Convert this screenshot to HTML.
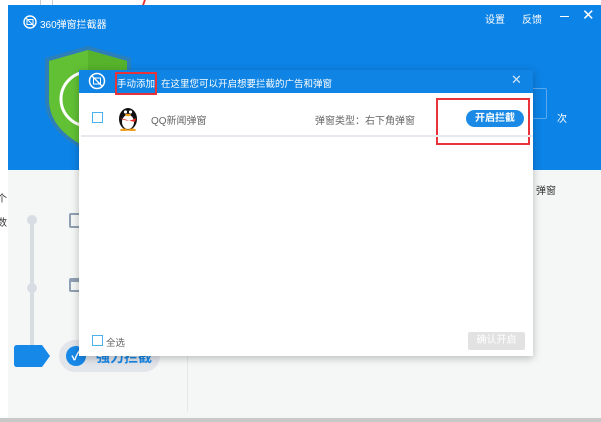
<!DOCTYPE html>
<html><head><meta charset="utf-8"><style>
*{margin:0;padding:0;box-sizing:border-box}
body{width:601px;height:422px;overflow:hidden;background:#fff;position:relative;font-family:"Liberation Sans","Noto Sans CJK SC",sans-serif;font-size:10px}
.a{position:absolute;white-space:nowrap}
</style></head><body>
<div class="a" style="left:40px;top:0;width:1px;height:5px;background:#ccc"></div>
<div class="a" style="left:52px;top:0;width:1px;height:5px;background:#ccc"></div>
<div class="a" style="left:143px;top:0;width:2px;height:5px;background:#e33;transform:skewX(-20deg)"></div>
<div class="a" style="left:0;top:418px;width:601px;height:4px;background:#c8c8c8"></div>
<!-- main window -->
<div class="a" style="left:8px;top:5px;width:600px;height:413px;background:#f5f7f7"></div>
<div class="a" style="left:8px;top:5px;width:600px;height:165px;background:#0c83e6"></div>
<svg class="a" style="left:23px;top:15px" width="14" height="14" viewBox="0 0 14 14"><circle cx="7" cy="7" r="6" fill="none" stroke="#fff" stroke-width="1.4"/><rect x="4" y="4.5" width="6" height="5" fill="none" stroke="#fff"/><line x1="3" y1="3" x2="11" y2="11" stroke="#fff"/></svg>
<div class="a" style="left:40px;top:16px;color:#fff;font-size:10px">360弹窗拦截器</div>
<div class="a" style="left:485px;top:11px;color:#fff;font-size:10px">设置</div>
<div class="a" style="left:522px;top:11px;color:#fff;font-size:10px">反馈</div>
<div class="a" style="left:560px;top:16px;width:9px;height:1px;background:#fff"></div>
<div class="a" style="left:582px;top:6px;color:#fff;font-size:15px">✕</div>
<svg class="a" style="left:43px;top:44px" width="90" height="110" viewBox="0 0 90 110"><path d="M45 2 L88 14 V55 C88 80 70 96 45 108 C20 96 2 80 2 55 V14 Z" fill="#2c7fb8"/><path d="M45 6 L84 17 V55 C84 78 68 93 45 104 C22 93 6 78 6 55 V17 Z" fill="#62c034"/><path d="M45 6 L84 17 V55 C84 78 68 93 45 104 Z" fill="#56b32b"/><circle cx="45" cy="55" r="27" fill="none" stroke="#fff" stroke-width="3"/></svg>
<div class="a" style="left:517px;top:88px;width:30px;height:31px;border:1px solid #5aa8ee;border-radius:2px"></div>
<div class="a" style="left:557px;top:110px;color:#fff;font-size:10px">次</div>
<div class="a" style="left:536px;top:182px;color:#333;font-size:10px">弹窗</div>
<div class="a" style="left:-3px;top:190px;color:#333">个</div>
<div class="a" style="left:-3px;top:214px;color:#333">数</div>
<div class="a" style="left:187px;top:185px;width:1px;height:227px;background:#e6e8e8"></div>
<div class="a" style="left:30px;top:216px;width:4px;height:134px;background:#d8dce3"></div>
<div class="a" style="left:27px;top:215px;width:10px;height:10px;border-radius:50%;background:#d8dce3"></div>
<div class="a" style="left:27px;top:283px;width:10px;height:10px;border-radius:50%;background:#d8dce3"></div>
<div class="a" style="left:69px;top:213px;width:13px;height:15px;border:2px solid #8fa0b3;border-radius:2px"></div>
<div class="a" style="left:69px;top:278px;width:13px;height:14px;border:2px solid #8fa0b3;border-top-width:4px;border-radius:2px"></div>
<svg class="a" style="left:14px;top:345px" width="36" height="22"><path d="M3 0 H28 L36 11 L28 22 H3 Q0 22 0 19 V3 Q0 0 3 0Z" fill="#1688e8"/></svg>
<div class="a" style="left:59px;top:340px;width:101px;height:32px;border-radius:16px;background:#e2e6eb"></div>
<div class="a" style="left:66px;top:346px;width:20px;height:20px;border-radius:50%;background:#1688e8;color:#fff;font-size:13px;text-align:center;line-height:20px;font-weight:bold">✓</div>
<div class="a" style="left:96px;top:347px;color:#1688e8;font-size:14px;font-weight:bold">强力拦截</div>
<!-- dialog -->
<div class="a" style="left:79px;top:70px;width:454px;height:286px;background:#fff;box-shadow:0 2px 8px rgba(0,0,0,.25)"></div>
<div class="a" style="left:79px;top:70px;width:454px;height:23px;background:#0f84e4"></div>
<svg class="a" style="left:88px;top:72px" width="18" height="18" viewBox="0 0 18 18"><circle cx="9" cy="9" r="7.5" fill="none" stroke="#fff" stroke-width="1.5"/><rect x="5.5" y="6" width="7" height="6" fill="none" stroke="#fff"/><line x1="4" y1="4" x2="14" y2="14" stroke="#fff" stroke-width="1.3"/></svg>
<div class="a" style="left:117px;top:76px;color:#fff;font-size:9.5px">手动添加</div>
<div class="a" style="left:155px;top:77px;width:1px;height:10px;background:#7fbcf0"></div>
<div class="a" style="left:161px;top:76px;color:#fff;font-size:9.5px">在这里您可以开启想要拦截的广告和弹窗</div>
<div class="a" style="left:511px;top:72px;color:#cfe4f8;font-size:13px">✕</div>
<div class="a" style="left:115px;top:72px;width:42px;height:23px;border:2px solid #e8333a"></div>
<div class="a" style="left:92px;top:112px;width:11px;height:11px;border:1px solid #4ab0ee"></div>
<svg class="a" style="left:117px;top:104px" width="22" height="27" viewBox="0 0 22 27"><ellipse cx="11" cy="15" rx="9" ry="11" fill="#111"/><ellipse cx="11" cy="18" rx="6" ry="7" fill="#fff"/><path d="M3 14 Q11 19 19 14 L18 18 L14 17 Z" fill="#e62a1f"/><ellipse cx="7" cy="26" rx="4" ry="1.5" fill="#f0a020"/><ellipse cx="15" cy="26" rx="4" ry="1.5" fill="#f0a020"/><circle cx="8.5" cy="8" r="1.6" fill="#fff"/><circle cx="13.5" cy="8" r="1.6" fill="#fff"/><ellipse cx="11" cy="11" rx="3" ry="1.3" fill="#f0a020"/></svg>
<div class="a" style="left:151px;top:112px;color:#666;font-size:10px">QQ新闻弹窗</div>
<div class="a" style="left:315px;top:112px;color:#666;font-size:10px">弹窗类型：右下角弹窗</div>
<div class="a" style="left:466px;top:110px;width:58px;height:17px;border-radius:9px;background:#1a8ae6;color:#fff;font-size:10px;font-weight:bold;text-align:center;line-height:17px">开启拦截</div>
<div class="a" style="left:436px;top:98px;width:94px;height:47px;border:2px solid #e8333a"></div>
<div class="a" style="left:81px;top:135px;width:452px;height:2px;background:#e6eaee"></div>
<div class="a" style="left:92px;top:335px;width:11px;height:11px;border:1px solid #4ab0ee"></div>
<div class="a" style="left:106px;top:335px;color:#666;font-size:9.5px">全选</div>
<div class="a" style="left:468px;top:332px;width:57px;height:18px;background:#e2e2e2;border-radius:2px;color:#fff;font-size:10px;text-align:center;line-height:18px">确认开启</div>
</body></html>
